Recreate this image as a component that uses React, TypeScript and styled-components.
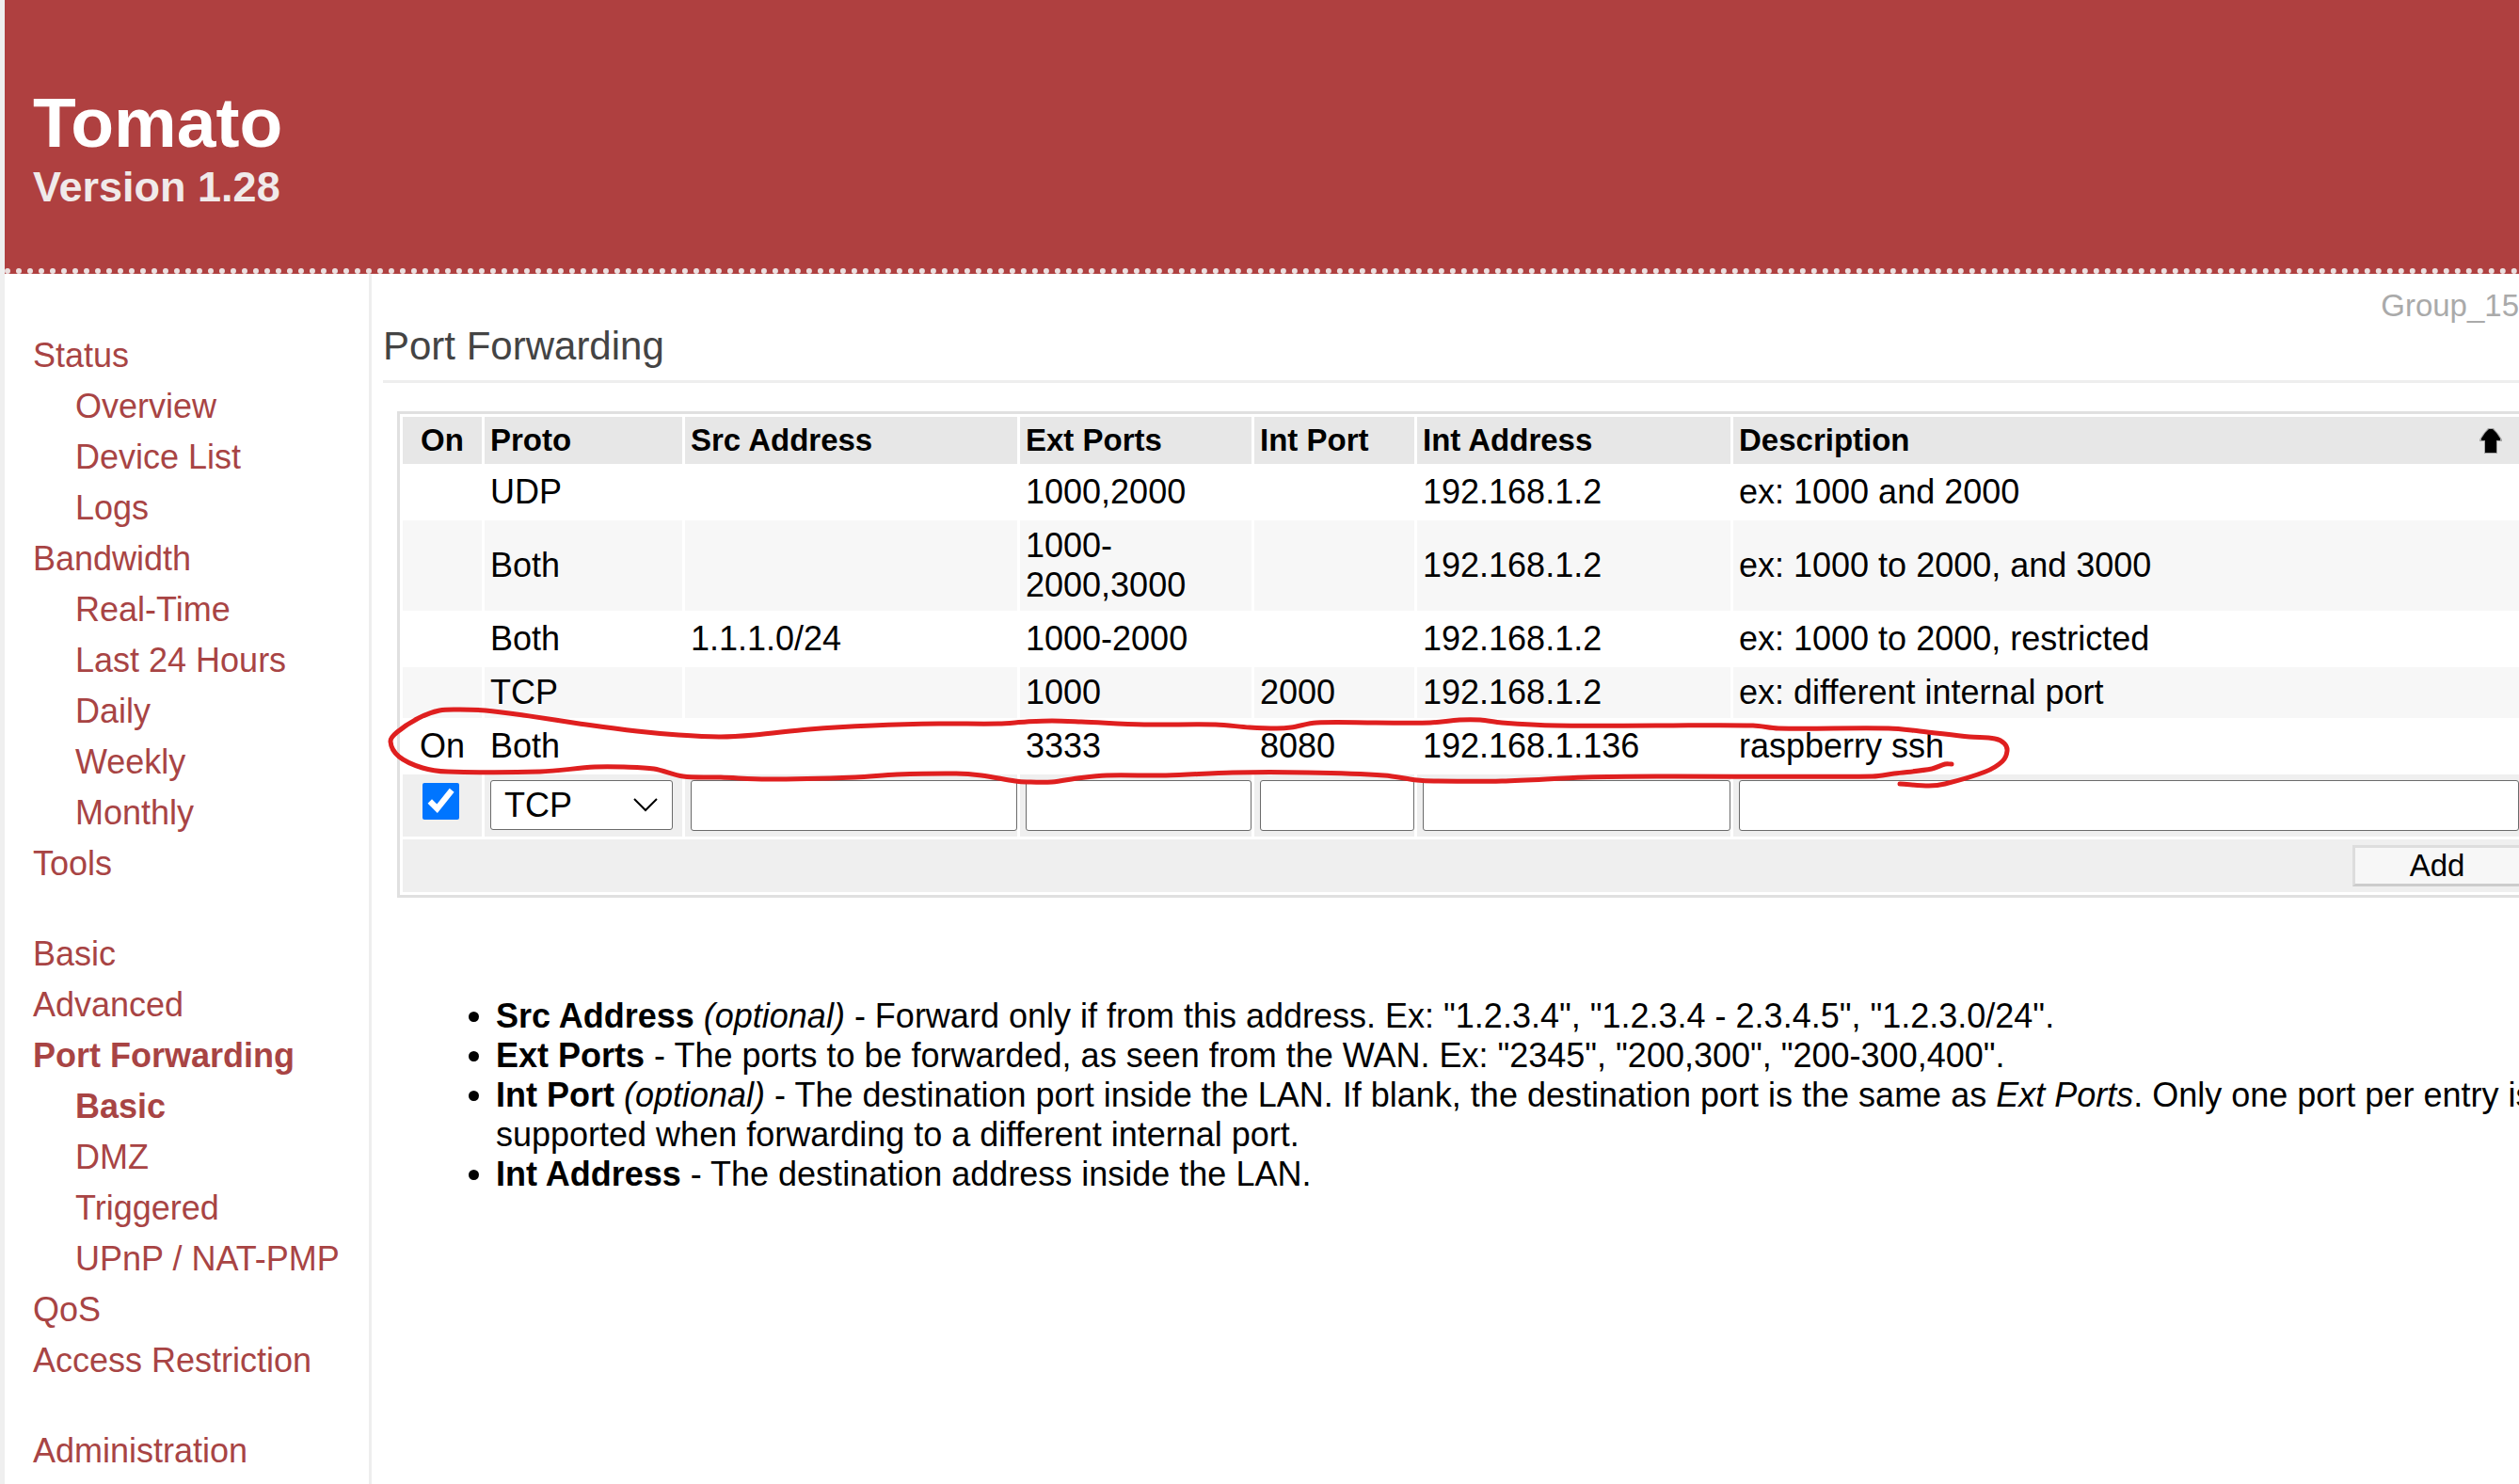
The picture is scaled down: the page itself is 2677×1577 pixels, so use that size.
import React, { useState } from "react";
import styled, { createGlobalStyle } from "styled-components";

const color = {
  tomato: "#af4040",
  link: "#a84444",
  line: "#eeeeee",
  tableBorder: "#e0e0e0",
  head: "#e7e7e7",
  odd: "#f7f7f7",
  editor: "#efefef",
  marker: "#df1f1f",
};

const GlobalStyle = createGlobalStyle`
  *, *::before, *::after { box-sizing: border-box; }
  html { overflow-x: hidden; }
  body {
    margin: 0;
    background: #ffffff;
    color: #000000;
    font-family: "Liberation Sans", Arial, sans-serif;
    font-size: 36px;
    line-height: 42px;
    overflow-x: hidden;
  }
`;

const Page = styled.div`
  display: flex;
  flex-direction: column;
  width: calc(100% + 12px);
  min-height: 100vh;
  border-left: 5px solid #efefef;
`;

const Header = styled.header`
  padding: 88px 30px 59px;
  background: ${color.tomato};
  border-bottom: 6px dotted #ebe0e0;
`;

const Brand = styled.h1`
  margin: 0;
  color: #ffffff;
  font-size: 75px;
  line-height: 84px;
`;

const Version = styled.div`
  color: #f0eaea;
  font-size: 45px;
  font-weight: bold;
  line-height: 54px;
`;

const Body = styled.div`
  display: flex;
  flex: 1;
`;

const Sidebar = styled.nav`
  display: flex;
  flex-direction: column;
  flex: 0 0 390px;
  gap: 42px;
  padding: 60px 0 0 30px;
  border-right: 3px solid ${color.line};
`;

const NavGroup = styled.ul`
  margin: 0;
  padding: 0;
  list-style: none;
`;

const NavLink = styled.a<{ $sub?: boolean; $active?: boolean }>`
  display: block;
  padding-left: ${(p) => (p.$sub ? 45 : 0)}px;
  color: ${color.link};
  font-weight: ${(p) => (p.$active ? "bold" : "normal")};
  line-height: 54px;
  text-decoration: none;
  white-space: nowrap;
`;

const Main = styled.main`
  flex: 1;
  min-width: 0;
  padding: 15px 0 0 12px;
`;

const Ident = styled.div`
  padding-right: 12px;
  color: #aaaaaa;
  font-size: 33px;
  line-height: 38px;
  text-align: right;
`;

const SectionTitle = styled.h2`
  margin: 0 0 30px;
  padding-bottom: 12px;
  border-bottom: 3px solid ${color.line};
  color: #444444;
  font-size: 42px;
  font-weight: normal;
  line-height: 48px;
`;

const TableArea = styled.div`
  position: relative;
  margin-left: 15px;
`;

const Table = styled.table`
  width: 100%;
  border: 3px solid ${color.tableBorder};
  border-collapse: separate;
  border-spacing: 3px;
  table-layout: fixed;
`;

const Col = styled.col<{ $width?: number }>`
  width: ${(p) => (p.$width ? `${p.$width}px` : "auto")};
`;

const HeadCell = styled.th<{ $center?: boolean }>`
  padding: 4px 6px;
  background: ${color.head};
  font-size: 33px;
  text-align: ${(p) => (p.$center ? "center" : "left")};
  white-space: nowrap;
`;

const SortLabel = styled.span`
  display: flex;
  align-items: center;
  justify-content: space-between;
  padding-right: 18px;
`;

const Cell = styled.td<{ $shaded?: boolean; $center?: boolean }>`
  height: 54px;
  padding: 6px;
  background: ${(p) => (p.$shaded ? color.odd : "#ffffff")};
  text-align: ${(p) => (p.$center ? "center" : "left")};
`;

const EditCell = styled.td`
  height: 66px;
  padding: 6px 0 6px 6px;
  background: ${color.editor};
  vertical-align: top;

  &:last-child {
    padding-right: 6px;
  }
`;

const CheckBox = styled.input`
  display: block;
  width: 39px;
  height: 39px;
  margin: 3px 0 0 15px;
  accent-color: #0075ff;
`;

const TextBox = styled.input`
  display: block;
  width: 100%;
  height: 54px;
  padding: 3px 6px;
  border: 1px solid #6b6b6b;
  border-radius: 3px;
  background: #ffffff;
  font: inherit;
`;

const SelectBox = styled.span`
  display: block;
  position: relative;
  width: 194px;
`;

const Select = styled.select`
  display: block;
  width: 100%;
  height: 53px;
  padding: 0 48px 0 14px;
  border: 1px solid #6b6b6b;
  border-radius: 3px;
  background: #ffffff;
  color: #000000;
  appearance: none;
  font: inherit;
`;

const Chevron = styled.svg`
  position: absolute;
  top: 18px;
  right: 16px;
  pointer-events: none;
`;

const FootCell = styled.td`
  height: 56px;
  padding: 6px 3px 6px 6px;
  background: ${color.editor};
`;

const AddButton = styled.button`
  display: block;
  width: 180px;
  height: 44px;
  margin-left: auto;
  padding: 0;
  border: 3px solid;
  border-color: #dddddd #cccccc #cccccc #dddddd;
  background: ${color.odd};
  color: #000000;
  font-family: inherit;
  font-size: 33px;
  line-height: 38px;
`;

const Marker = styled.svg`
  position: absolute;
  top: 313px;
  left: -12px;
  pointer-events: none;
`;

const Notes = styled.ul`
  margin: 105px -12px 0 0;
  padding: 0 0 0 120px;
`;

type NavItem = { label: string; sub?: boolean; active?: boolean };

const nav: NavItem[][] = [
  [
    { label: "Status" },
    { label: "Overview", sub: true },
    { label: "Device List", sub: true },
    { label: "Logs", sub: true },
    { label: "Bandwidth" },
    { label: "Real-Time", sub: true },
    { label: "Last 24 Hours", sub: true },
    { label: "Daily", sub: true },
    { label: "Weekly", sub: true },
    { label: "Monthly", sub: true },
    { label: "Tools" },
  ],
  [
    { label: "Basic" },
    { label: "Advanced" },
    { label: "Port Forwarding", active: true },
    { label: "Basic", sub: true, active: true },
    { label: "DMZ", sub: true },
    { label: "Triggered", sub: true },
    { label: "UPnP / NAT-PMP", sub: true },
    { label: "QoS" },
    { label: "Access Restriction" },
  ],
  [{ label: "Administration" }],
];

const columns = [
  { id: "on", label: "On", width: 84 },
  { id: "proto", label: "Proto", width: 210 },
  { id: "src", label: "Src Address", width: 353 },
  { id: "ext", label: "Ext Ports", width: 246 },
  { id: "port", label: "Int Port", width: 170 },
  { id: "addr", label: "Int Address", width: 333 },
  { id: "desc", label: "Description" },
];

const rules = [
  ["", "UDP", "", "1000,2000", "", "192.168.1.2", "ex: 1000 and 2000"],
  ["", "Both", "", "1000-2000,3000", "", "192.168.1.2", "ex: 1000 to 2000, and 3000"],
  ["", "Both", "1.1.1.0/24", "1000-2000", "", "192.168.1.2", "ex: 1000 to 2000, restricted"],
  ["", "TCP", "", "1000", "2000", "192.168.1.2", "ex: different internal port"],
  ["On", "Both", "", "3333", "8080", "192.168.1.136", "raspberry ssh"],
];

/* Pen stroke drawn round the active rule, as points along the line. */
const stroke: [number, number][] = [
  [2019, 833], [2050, 835], [2067, 833], [2110, 820], [2128, 809], [2133, 798],
  [2130, 790], [2120, 785], [2093, 783], [2040, 777], [2007, 774], [1890, 774],
  [1863, 771], [1760, 771], [1654, 771], [1596, 768], [1573, 765], [1551, 765],
  [1520, 768], [1462, 768], [1399, 768], [1372, 773], [1357, 774], [1328, 773],
  [1292, 770], [1216, 770], [1149, 767], [1118, 766], [1091, 767], [1061, 769],
  [998, 769], [927, 771], [860, 775], [802, 781], [766, 783], [721, 781],
  [677, 777], [623, 770], [556, 760], [516, 755], [489, 754], [467, 755],
  [445, 763], [422, 778], [415, 788], [424, 804], [449, 816], [476, 820],
  [574, 820], [632, 815], [663, 815], [695, 817], [726, 825], [766, 826],
  [815, 828], [909, 826], [953, 823], [1016, 822], [1043, 824], [1079, 830],
  [1091, 831], [1118, 831], [1145, 827], [1176, 824], [1239, 824], [1310, 821],
  [1390, 821], [1471, 824], [1506, 829], [1524, 830], [1596, 830], [1685, 826],
  [1760, 825], [1990, 825], [2013, 822], [2053, 817], [2067, 812], [2074, 812],
];

/* Joins the points with a smooth curve through every one of them. */
function smooth(points: [number, number][]) {
  let d = `M${points[0][0]} ${points[0][1]}`;
  for (let i = 0; i < points.length - 1; i++) {
    const a = points[Math.max(i - 1, 0)];
    const b = points[i];
    const c = points[i + 1];
    const e = points[Math.min(i + 2, points.length - 1)];
    const len = Math.hypot(c[0] - b[0], c[1] - b[1]);
    const before = Math.hypot(c[0] - a[0], c[1] - a[1]) || 1;
    const after = Math.hypot(e[0] - b[0], e[1] - b[1]) || 1;
    const k = len / 3;
    d += ` C${b[0] + ((c[0] - a[0]) / before) * k} ${b[1] + ((c[1] - a[1]) / before) * k}`;
    d += ` ${c[0] - ((e[0] - b[0]) / after) * k} ${c[1] - ((e[1] - b[1]) / after) * k}`;
    d += ` ${c[0]} ${c[1]}`;
  }
  return d;
}

function SortArrow() {
  return (
    <svg width="24" height="27" viewBox="0 0 24 27" aria-hidden="true">
      <path d="M9 0H15L20 6L24 12V14H19V27H5V14H0V12L4 6Z" fill="#8c8c8c" opacity="0.7" />
      <path d="M10 1H14L18 5L22 11V13H18V26H6V13H2V11L6 5Z" fill="#000000" />
    </svg>
  );
}

export default function App() {
  const [enabled, setEnabled] = useState(true);

  return (
    <>
      <GlobalStyle />
      <Page>
        <Header>
          <Brand>Tomato</Brand>
          <Version>Version 1.28</Version>
        </Header>
        <Body>
          <Sidebar aria-label="Main">
            {nav.map((group, g) => (
              <NavGroup key={g}>
                {group.map((item, i) => (
                  <li key={i}>
                    <NavLink href="#" $sub={item.sub} $active={item.active}>
                      {item.label}
                    </NavLink>
                  </li>
                ))}
              </NavGroup>
            ))}
          </Sidebar>
          <Main>
            <Ident>Group_15</Ident>
            <SectionTitle>Port Forwarding</SectionTitle>
            <TableArea>
              <Table>
                <colgroup>
                  {columns.map((c) => (
                    <Col key={c.id} $width={c.width} />
                  ))}
                </colgroup>
                <thead>
                  <tr>
                    {columns.map((c) => (
                      <HeadCell key={c.id} id={c.id} scope="col" $center={c.id === "on"}>
                        {c.id === "desc" ? (
                          <SortLabel>
                            {c.label}
                            <SortArrow />
                          </SortLabel>
                        ) : (
                          c.label
                        )}
                      </HeadCell>
                    ))}
                  </tr>
                </thead>
                <tbody>
                  {rules.map((rule, r) => (
                    <tr key={r}>
                      {rule.map((value, i) => (
                        <Cell key={i} $shaded={r % 2 === 1} $center={i === 0}>
                          {value}
                        </Cell>
                      ))}
                    </tr>
                  ))}
                  <tr>
                    <EditCell>
                      <CheckBox
                        type="checkbox"
                        aria-labelledby="on"
                        checked={enabled}
                        onChange={(e) => setEnabled(e.target.checked)}
                      />
                    </EditCell>
                    <EditCell>
                      <SelectBox>
                        <Select aria-labelledby="proto" defaultValue="TCP">
                          <option>TCP</option>
                          <option>UDP</option>
                          <option>Both</option>
                        </Select>
                        <Chevron width="26" height="16" viewBox="0 0 26 16" aria-hidden="true">
                          <path d="M1 2L13 14L25 2" fill="none" stroke="#000000" strokeWidth="2" />
                        </Chevron>
                      </SelectBox>
                    </EditCell>
                    {columns.slice(2).map((c) => (
                      <EditCell key={c.id}>
                        <TextBox type="text" aria-labelledby={c.id} />
                      </EditCell>
                    ))}
                  </tr>
                </tbody>
                <tfoot>
                  <tr>
                    <FootCell colSpan={columns.length}>
                      <AddButton type="button">Add</AddButton>
                    </FootCell>
                  </tr>
                </tfoot>
              </Table>
              <Marker width="1730" height="92" viewBox="410 750 1730 92" aria-hidden="true">
                <path
                  d={smooth(stroke)}
                  fill="none"
                  stroke={color.marker}
                  strokeWidth="5"
                  strokeLinecap="round"
                  strokeLinejoin="round"
                />
              </Marker>
            </TableArea>
            <Notes>
              <li>
                <b>Src Address</b> <i>(optional)</i> - Forward only if from this address. Ex: "1.2.3.4", "1.2.3.4 -
                2.3.4.5", "1.2.3.0/24".
              </li>
              <li>
                <b>Ext Ports</b> - The ports to be forwarded, as seen from the WAN. Ex: "2345", "200,300",
                "200-300,400".
              </li>
              <li>
                <b>Int Port</b> <i>(optional)</i> - The destination port inside the LAN. If blank, the destination
                port is the same as <i>Ext Ports</i>. Only one port per entry is supported when forwarding to a
                different internal port.
              </li>
              <li>
                <b>Int Address</b> - The destination address inside the LAN.
              </li>
            </Notes>
          </Main>
        </Body>
      </Page>
    </>
  );
}
